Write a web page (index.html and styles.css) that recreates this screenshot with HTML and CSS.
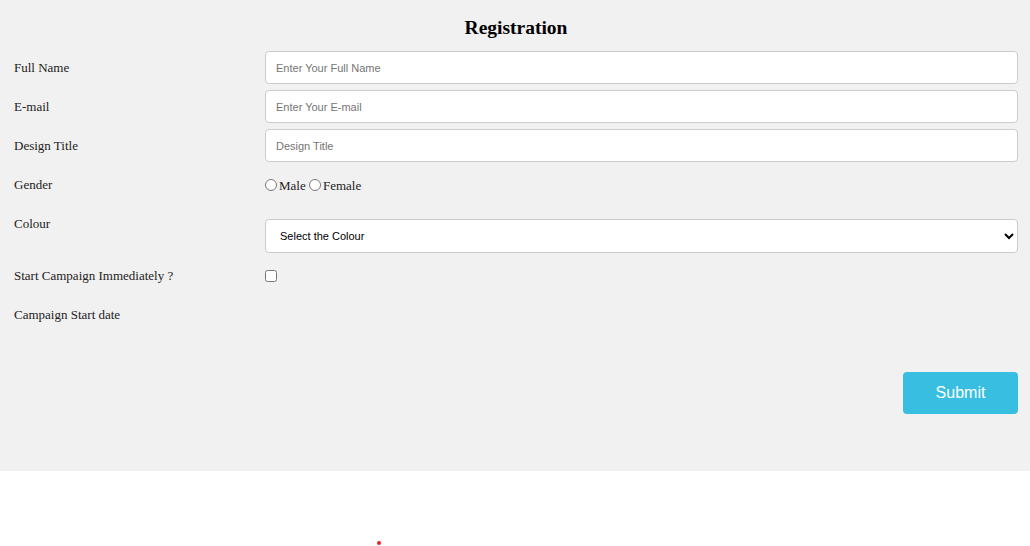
FILE: index.html
```html
<!DOCTYPE html>
<html lang="en">
<head>
<meta charset="utf-8">
<title>Registration</title>
<link rel="stylesheet" href="styles.css">
</head>
<body>
<form class="reg">
  <h3 class="title">Registration</h3>
  <div class="row">
    <label class="lbl" for="fname">Full Name</label>
    <input class="field" id="fname" type="text" placeholder="Enter Your Full Name">
  </div>
  <div class="row">
    <label class="lbl" for="email">E-mail</label>
    <input class="field" id="email" type="text" placeholder="Enter Your E-mail">
  </div>
  <div class="row">
    <label class="lbl" for="dtitle">Design Title</label>
    <input class="field" id="dtitle" type="text" placeholder="Design Title">
  </div>
  <div class="row">
    <label class="lbl">Gender</label>
    <div class="radios"><input class="radio" type="radio" name="g" id="male"><label for="male">Male</label> <input class="radio" type="radio" name="g" id="female"><label for="female">Female</label></div>
  </div>
  <div class="row">
    <label class="lbl" for="colour">Colour</label>
    <select class="sel" id="colour">
      <option>Select the Colour</option>
    </select>
  </div>
  <div class="row">
    <label class="lbl" for="start">Start Campaign Immediately ?</label>
    <div class="check"><input class="box" type="checkbox" id="start"></div>
  </div>
  <div class="row">
    <label class="lbl">Campaign Start date</label>
    <div></div>
  </div>
  <div class="actions">
    <button class="submit" type="button">Submit</button>
  </div>
</form>
<div class="below"><span class="dot"></span></div>
</body>
</html>
```
FILE: styles.css
```css
html, body {
  margin: 0;
  padding: 0;
  background: #ffffff;
}
body {
  font-family: "Liberation Serif", "Times New Roman", serif;
  color: #222;
}
.reg {
  box-sizing: border-box;
  height: 471px;
  background: #f1f1f1;
  padding: 17px 12px 0 14px;
}
.title {
  margin: 0 0 12px;
  text-align: center;
  font-size: 19.5px;
  line-height: 22px;
  font-weight: bold;
  color: #000;
}
.row {
  display: grid;
  grid-template-columns: 251px 1fr;
  margin-bottom: 6px;
  align-items: start;
}
.lbl {
  font-size: 13px;
  line-height: 33px;
}
.field {
  box-sizing: border-box;
  height: 33px;
  width: 100%;
  margin: 0;
  border: 1px solid #ccc;
  border-radius: 4px;
  padding: 0 10px;
  background: #fff;
  font-family: "Liberation Sans", Arial, sans-serif;
  font-size: 11px;
  color: #000;
}
.field::placeholder {
  color: #757575;
}
.radios {
  box-sizing: border-box;
  height: 33px;
  padding-top: 2px;
  font-size: 13px;
  line-height: 31px;
  overflow: visible;
}
.radio {
  margin: 0 2px 0 0;
  width: 12px;
  height: 12px;
  vertical-align: -1px;
}
.sel {
  box-sizing: border-box;
  margin: 12px 0 0;
  height: 34px;
  width: 100%;
  border: 1px solid #ccc;
  border-radius: 4px;
  padding: 0 10px;
  background: #fff;
  font-family: "Liberation Sans", Arial, sans-serif;
  font-size: 11px;
  color: #000;
}
.check {
  height: 33px;
  display: flex;
  align-items: center;
}
.box {
  margin: 1px 0 0 0;
  width: 12px;
  height: 12px;
}
.actions {
  display: flex;
  justify-content: flex-end;
  margin-top: 41px;
}
.submit {
  width: 115px;
  height: 42px;
  border: none;
  border-radius: 4px;
  background: #38bee0;
  color: #fff;
  font-family: "Liberation Sans", Arial, sans-serif;
  font-size: 16px;
  cursor: pointer;
}
.below {
  box-sizing: border-box;
  height: 75px;
  padding: 70px 0 0 377px;
}
.dot {
  display: block;
  width: 4px;
  height: 4px;
  border-radius: 50%;
  background: #e8202a;
}
```
